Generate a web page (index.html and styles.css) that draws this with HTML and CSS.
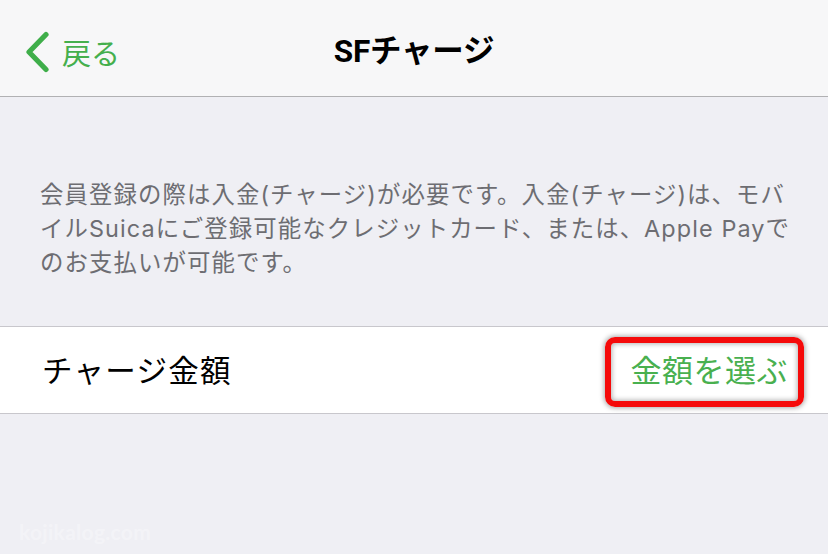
FILE: index.html
```html
<!DOCTYPE html>
<html lang="ja">
<head>
<meta charset="utf-8">
<title>SFチャージ</title>
<link rel="stylesheet" href="styles.css">
</head>
<body>
<div class="screen">
  <header class="nav">
    <div class="back">
      <svg class="chev" width="26" height="42" viewBox="0 0 26 42" aria-hidden="true">
        <path d="M21 3.5 L4 21 L21 38.5" fill="none" stroke="#3fae4a" stroke-width="5.2" stroke-linecap="round" stroke-linejoin="round"/>
      </svg>
      <span class="back-label">戻る</span>
    </div>
    <h1 class="title">SFチャージ</h1>
    <div class="spacer"></div>
  </header>
  <p class="note">会員登録の際は入金(チャージ)が必要です。入金(チャージ)は、モバイルSuicaにご登録可能なクレジットカード、または、Apple Payでのお支払いが可能です。</p>
  <div class="row">
    <span class="row-label">チャージ金額</span>
    <span class="row-value">金額を選ぶ<span class="highlight"></span></span>
  </div>
  <div class="watermark">kojikalog.com</div>
</div>
</body>
</html>
```
FILE: styles.css
```css
* { box-sizing: border-box; }
html, body { margin: 0; padding: 0; }
body {
  width: 828px;
  height: 554px;
  overflow: hidden;
  background: #efeff4;
  font-family: "Inter", "Noto Sans CJK JP", sans-serif;
}
.screen {
  position: relative;
  width: 828px;
  height: 554px;
  background: #efeff4;
}
.nav {
  height: 97px;
  padding-top: 8px;
  background: #f7f7f8;
  border-bottom: 1px solid #b1b1b3;
  display: grid;
  grid-template-columns: 1fr auto 1fr;
  align-items: center;
}
.back {
  display: flex;
  align-items: center;
  padding-left: 25px;
  gap: 11px;
  color: #45af4d;
}
.chev { display: block; }
.back-label {
  font-family: "Noto Sans CJK JP", sans-serif;
  font-size: 29px;
  line-height: 40px;
}
.title {
  margin: 0;
  font-family: "Roboto", "Noto Sans CJK JP", sans-serif;
  font-weight: 700;
  font-size: 31.5px;
  line-height: 40px;
  color: #000;
  letter-spacing: -0.2px;
}
.note {
  margin: 0;
  padding: 81px 26px 0 40px;
  height: 229px;
  font-size: 23.4px;
  line-height: 34px;
  color: #6d6d72;
  font-family: "Inter", "Noto Sans CJK JP", sans-serif;
  letter-spacing: 1.1px;
}
.row {
  height: 88px;
  background: #fff;
  border-top: 1px solid #c8c7cc;
  border-bottom: 1px solid #c8c7cc;
  display: flex;
  align-items: center;
  justify-content: space-between;
  padding: 0 40px 0 42px;
}
.row-label {
  font-family: "Noto Sans CJK JP", sans-serif;
  font-size: 30.5px;
  line-height: 40px;
  color: #000;
  letter-spacing: 1.3px;
  margin-bottom: 2px;
}
.row-value {
  position: relative;
  font-family: "Noto Sans CJK JP", sans-serif;
  font-size: 31px;
  line-height: 40px;
  color: #49b04f;
  letter-spacing: 0.5px;
  margin-bottom: 3px;
}
.highlight {
  position: absolute;
  left: -26px;
  right: -16px;
  top: -12px;
  bottom: -18px;
  border: 6px solid #f50a0a;
  border-radius: 10px;
  box-shadow: 0 0 5px 1px rgba(0,0,0,0.35), inset 0 0 5px 1px rgba(0,0,0,0.3);
}
.watermark {
  position: absolute;
  left: 19px;
  top: 519px;
  font-family: "Lato", sans-serif;
  font-size: 21px;
  font-weight: 700;
  color: rgba(255,255,255,0.3);
  letter-spacing: 0.3px;
}
```
